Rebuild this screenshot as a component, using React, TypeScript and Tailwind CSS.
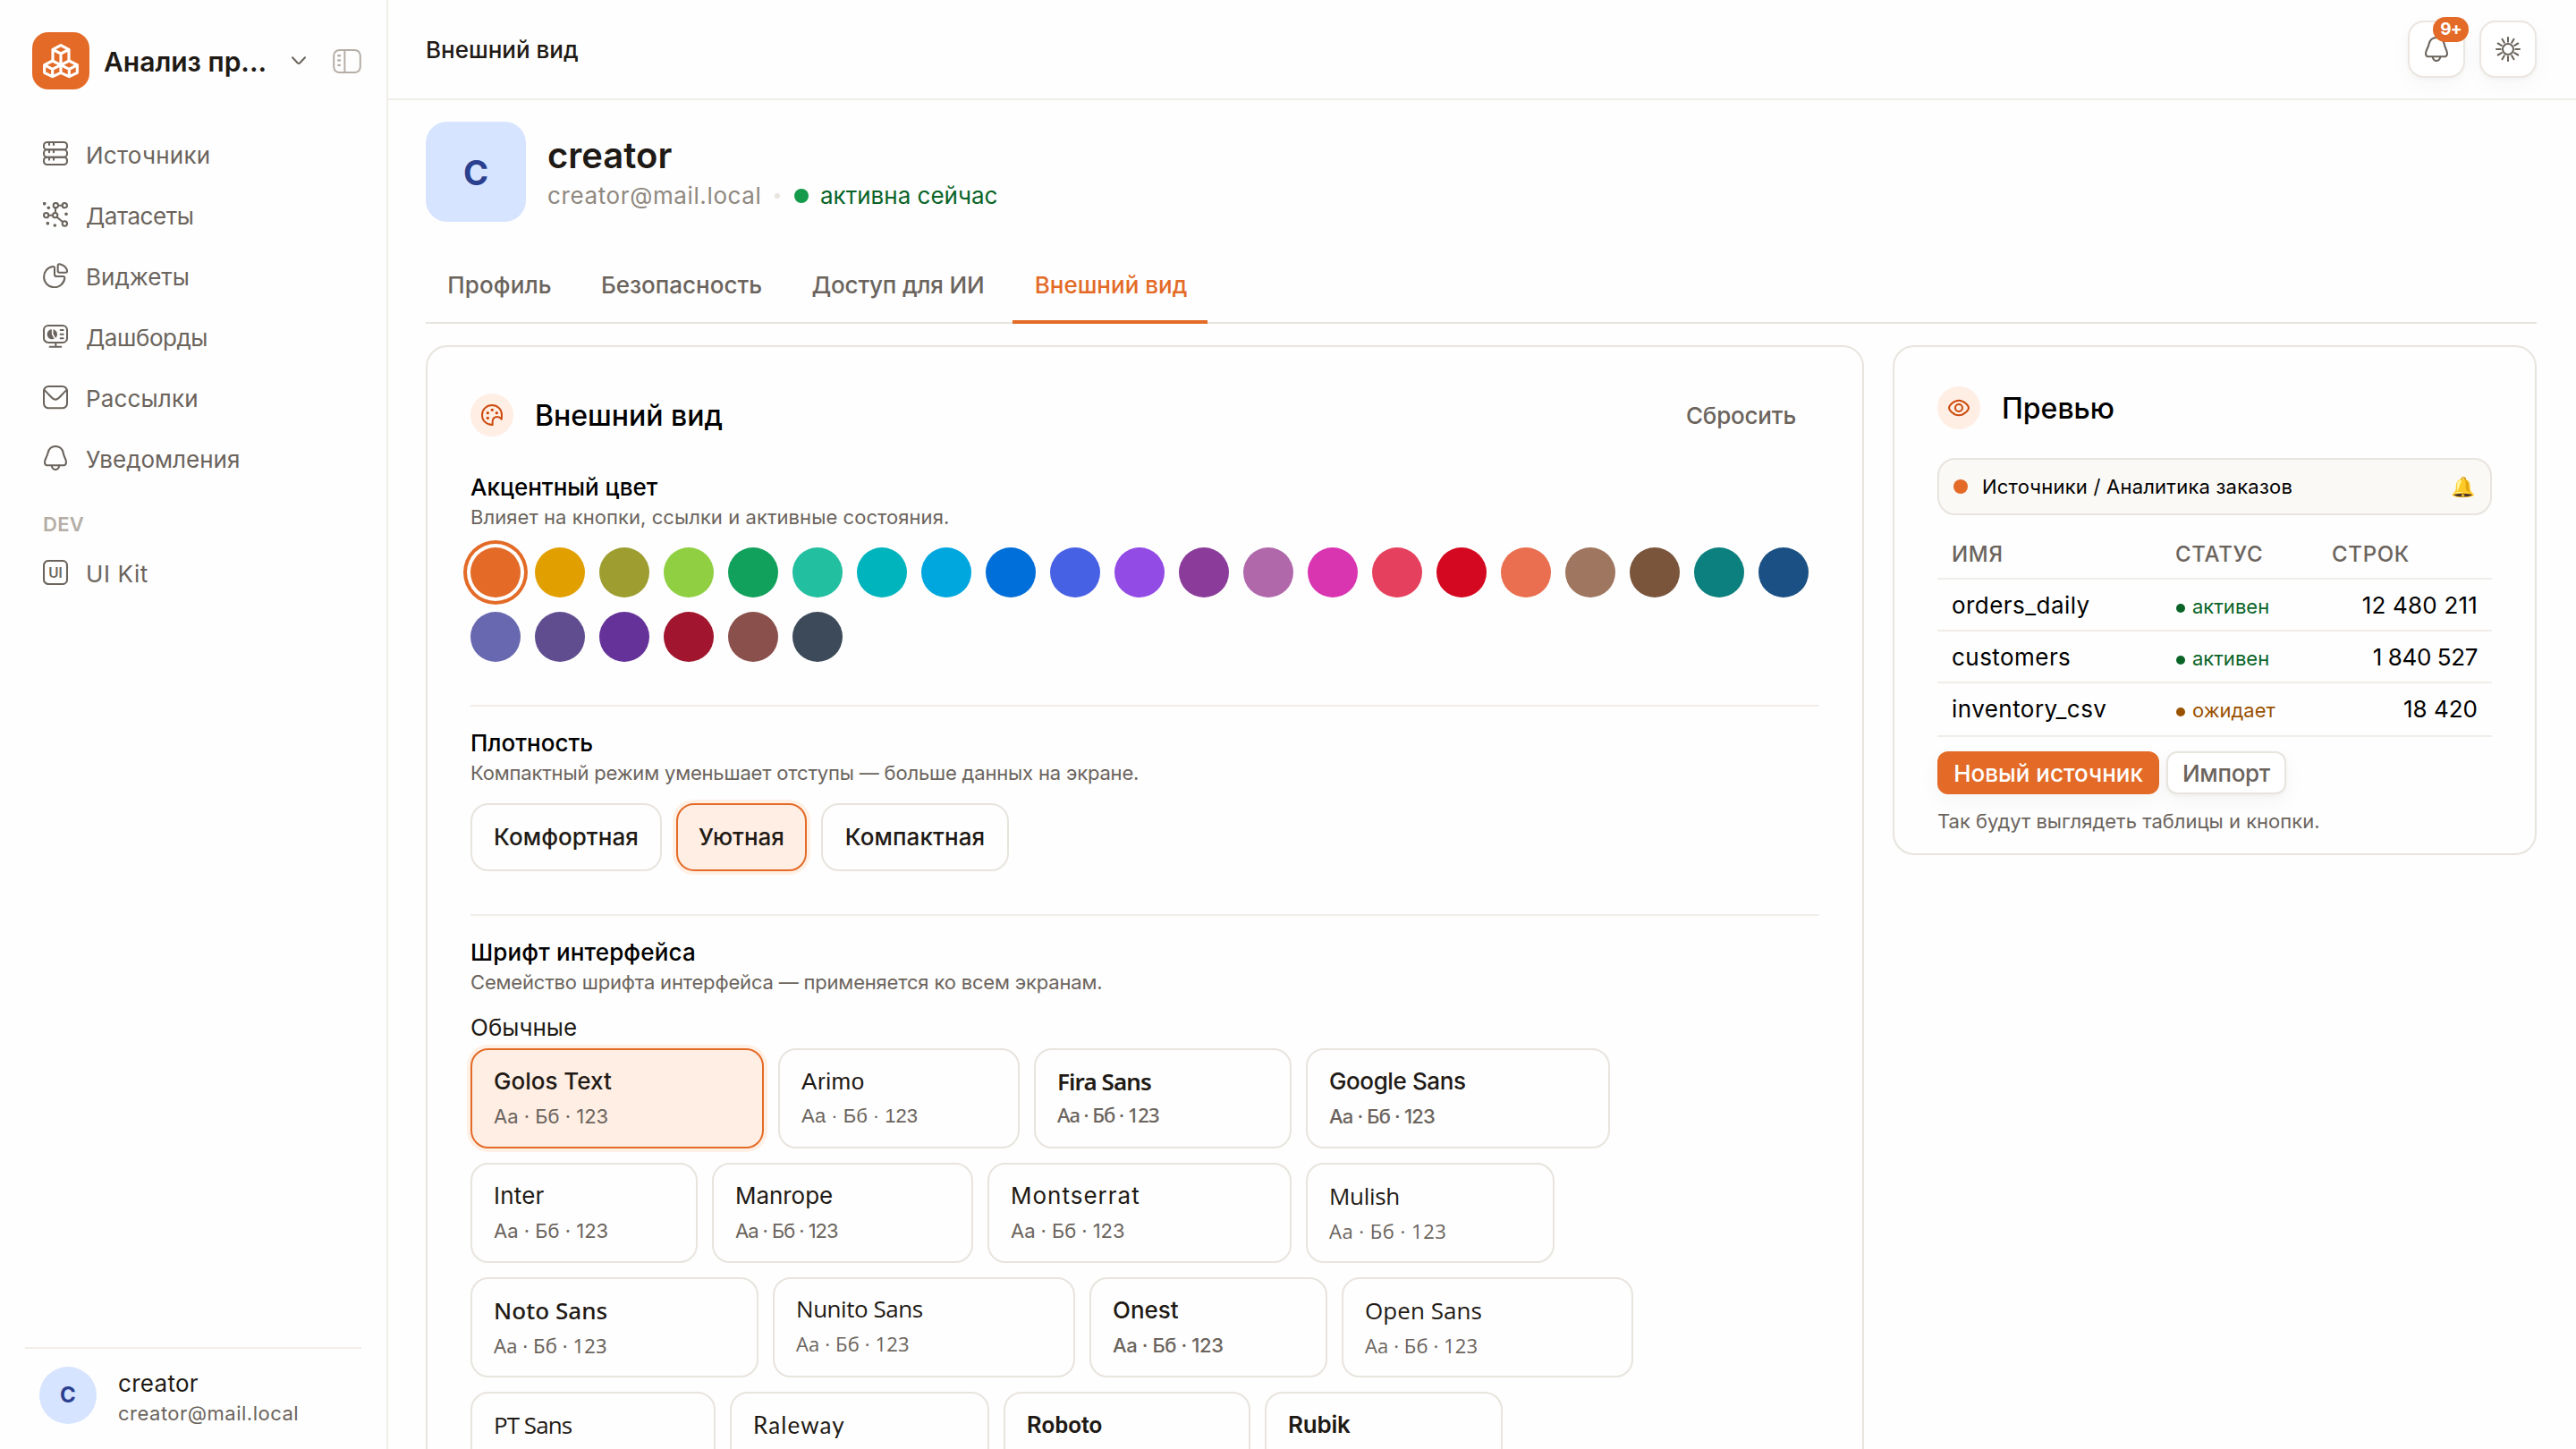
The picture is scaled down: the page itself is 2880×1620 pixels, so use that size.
import type { ReactNode } from "react";
import clsx from "clsx";

const Icon = ({ children, className = "size-7" }: { children: ReactNode; className?: string }) => (
  <svg
    viewBox="0 0 84 84"
    fill="none"
    stroke="currentColor"
    strokeWidth={6.2}
    strokeLinecap="round"
    strokeLinejoin="round"
    className={clsx("shrink-0", className)}
  >
    {children}
  </svg>
);

const SourcesIcon = () => (
  <Icon>
    <rect x="3" y="3" width="78" height="25" rx="11" />
    <rect x="3" y="28" width="78" height="25" rx="11" />
    <rect x="3" y="53" width="78" height="25" rx="11" />
    <path d="M21 5v7M36 5v7M21 30v7M36 30v7M21 55v7M36 55v7" />
  </Icon>
);

const DatasetsIcon = () => (
  <Icon>
    <circle cx="43" cy="11" r="8" />
    <circle cx="73" cy="11" r="8" />
    <circle cx="11" cy="44" r="8" />
    <circle cx="41" cy="44" r="8" />
    <circle cx="73" cy="72" r="8" />
    <path d="M51 11h14M19 44h14M42 36V19M47 50l19 16" />
    <g fill="currentColor" stroke="none">
      <circle cx="5" cy="5" r="5.5" />
      <circle cx="19" cy="19" r="5.5" />
      <circle cx="78" cy="40" r="5.5" />
      <circle cx="16" cy="71" r="5.5" />
      <circle cx="40" cy="78" r="5.5" />
    </g>
  </Icon>
);

const WidgetsIcon = () => (
  <Icon>
    <path d="M33 12A35 35 0 1 0 73 51Q73 45 68 45H46Q39 45 39 38V17Q39 11 33 12Z" />
    <path d="M50 9Q50 3 56 4Q78 10 81 26Q82 32 76 32H56Q50 32 50 27Z" />
  </Icon>
);

const DashboardsIcon = () => (
  <Icon>
    <rect x="3" y="6" width="78" height="57" rx="15" />
    <path d="M43 63v14M23 77h38M59 21h9M59 35h9M59 49h9" />
    <circle cx="31" cy="35" r="17" fill="currentColor" stroke="none" />
    <path d="M32 17v17l9 17" stroke="#fefefe" strokeWidth="5" />
  </Icon>
);

const MailIcon = () => (
  <Icon>
    <rect x="3" y="6" width="78" height="73" rx="16" />
    <path d="M4 18C20 30 30 50 42 50S64 30 80 18" />
  </Icon>
);

const BellIcon = () => (
  <Icon>
    <path d="M42 3C28 3 20 12 17 24C14 38 6 46 6 56C6 63 11 67 17 67H66C73 67 78 63 78 56C78 46 70 38 68 24C65 12 56 3 42 3Z" />
    <path d="M29 68C31 76 36 81 42 81S53 76 55 68" />
  </Icon>
);

const UiKitIcon = () => (
  <Icon>
    <rect x="3" y="3" width="78" height="78" rx="15" />
    <text x="42" y="59" textAnchor="middle" fontSize="46" fontWeight="600" fill="currentColor" stroke="none">
      UI
    </text>
  </Icon>
);

const rays = [0, 30, 60, 90, 120, 150, 180, 210, 240, 270, 300, 330];

const SunIcon = () => (
  <Icon>
    <circle cx="42" cy="42" r="18" />
    {rays.map((deg) => (
      <path key={deg} d="M42 3v14" transform={`rotate(${deg} 42 42)`} />
    ))}
  </Icon>
);

const PaletteIcon = () => (
  <svg viewBox="0 0 72 72" fill="none" stroke="currentColor" strokeWidth={6} strokeLinejoin="round" className="size-6">
    <path d="M38 69C18 69 3 55 3 36C3 17 18 3 36 3C55 3 69 17 69 36C69 42 69 46 68 50Q62 42 54 42C43 42 38 50 38 59Z" />
    <g fill="currentColor" stroke="none">
      <circle cx="22" cy="29" r="5" />
      <circle cx="37" cy="19" r="5" />
      <circle cx="52" cy="29" r="5" />
      <circle cx="22" cy="46" r="5" />
    </g>
  </svg>
);

const EyeIcon = () => (
  <svg viewBox="0 0 72 72" fill="none" stroke="currentColor" strokeWidth={6} className="size-6">
    <path d="M3 36C3 29 18 11 36 11S69 29 69 36S54 61 36 61S3 43 3 36Z" />
    <circle cx="36" cy="36" r="12" />
  </svg>
);

const LogoIcon = () => (
  <svg viewBox="0 0 120 120" fill="none" stroke="white" strokeWidth={9.5} strokeLinecap="round" strokeLinejoin="round" className="size-10">
    <path d="M33 58V22L60 8L87 22V58M33 22L60 36L87 22M60 36V72" />
    <path d="M5 74L32 60L60 74L32 88ZM5 74V100L32 113L60 100V74M32 88V113" />
    <path d="M60 74L88 60L115 74L88 88ZM115 74V100L88 113L60 100M88 88V113" />
  </svg>
);

const navItems = [
  { label: "Источники", icon: <SourcesIcon />, tracking: "tracking-[0.25px]" },
  { label: "Датасеты", icon: <DatasetsIcon />, tracking: "tracking-[-0.5px]" },
  { label: "Виджеты", icon: <WidgetsIcon />, tracking: "tracking-normal" },
  { label: "Дашборды", icon: <DashboardsIcon />, tracking: "tracking-[-0.45px]" },
  { label: "Рассылки", icon: <MailIcon />, tracking: "tracking-[0.15px]" },
  { label: "Уведомления", icon: <BellIcon />, tracking: "tracking-normal" },
];

const tabs = [
  { label: "Профиль", className: "w-[164px] pl-px tracking-[0.1px]" },
  { label: "Безопасность", className: "w-[228px] tracking-normal" },
  { label: "Доступ для ИИ", className: "w-[240px] tracking-[-0.2px]" },
  { label: "Внешний вид", className: "w-[218px] pl-0.5 tracking-normal", active: true },
];

const accents = [
  "bg-[#e36b27]", "bg-[#e2a000]", "bg-[#9e9d30]", "bg-[#90cf41]", "bg-[#12a15c]", "bg-[#22bfa0]", "bg-[#00b4bd]",
  "bg-[#00a7df]", "bg-[#006fd9]", "bg-[#4761e4]", "bg-[#934be6]", "bg-[#8b3c9a]", "bg-[#b068ab]", "bg-[#d935b1]",
  "bg-[#e5405d]", "bg-[#d40820]", "bg-[#ea6f50]", "bg-[#9f765f]", "bg-[#7a553c]", "bg-[#0c807e]", "bg-[#1a5083]",
  "bg-[#6868b0]", "bg-[#604d90]", "bg-[#653299]", "bg-[#a1162e]", "bg-[#8a504b]", "bg-[#3d4a59]",
];

const densities = [
  { label: "Комфортная", className: "w-[214px] tracking-[0.05px]" },
  { label: "Уютная", className: "w-[146px]", active: true },
  { label: "Компактная", className: "w-[210px] tracking-[0.1px]" },
];

type FontCard = { name: string; width: string; title: string; sample?: string; active?: boolean };

const fontRows: FontCard[][] = [
  [
    { name: "Golos Text", width: "w-[328px]", title: "font-medium", sample: "tracking-normal", active: true },
    { name: "Arimo", width: "w-[270px]", title: "font-['Liberation_Sans'] tracking-[0.6px]", sample: "font-['Liberation_Sans']" },
    { name: "Fira Sans", width: "w-[288px]", title: "font-['Noto_Sans'] font-semibold tracking-[-0.9px]", sample: "font-['Noto_Sans'] font-medium tracking-[-1px] -translate-y-0.5" },
    { name: "Google Sans", width: "w-[340px]", title: "font-medium tracking-[-0.4px]", sample: "font-medium tracking-[-0.83px]" },
  ],
  [
    { name: "Inter", width: "w-[254px]", title: "tracking-[0.2px]", sample: "tracking-normal" },
    { name: "Manrope", width: "w-[292px]", title: "tracking-[-0.05px]", sample: "tracking-[-1.05px]" },
    { name: "Montserrat", width: "w-[340px]", title: "tracking-[1px]", sample: "tracking-[-0.05px]" },
    { name: "Mulish", width: "w-[278px]", title: "font-['Open_Sans'] tracking-[-0.3px]", sample: "font-['Open_Sans'] tracking-[0.5px]" },
  ],
  [
    { name: "Noto Sans", width: "w-[322px]", title: "font-['Noto_Sans'] font-medium tracking-[0.05px]", sample: "font-['Noto_Sans'] tracking-[0.1px]" },
    { name: "Nunito Sans", width: "w-[338px]", title: "font-['Open_Sans'] tracking-[-0.45px] -translate-y-0.5", sample: "font-['Open_Sans'] tracking-[0.15px] -translate-y-0.5" },
    { name: "Onest", width: "w-[266px]", title: "font-medium", sample: "font-medium tracking-[-0.4px]" },
    { name: "Open Sans", width: "w-[326px]", title: "font-['Open_Sans'] font-medium tracking-[0.05px]", sample: "font-['Open_Sans'] tracking-[0.1px]" },
  ],
  [
    { name: "PT Sans", width: "w-[274px]", title: "font-['Open_Sans'] text-[25px] tracking-[-0.95px]" },
    { name: "Raleway", width: "w-[290px]", title: "font-['Lato'] tracking-[1.1px]" },
    { name: "Roboto", width: "w-[276px]", title: "font-['Roboto'] font-semibold tracking-[0.1px]" },
    { name: "Rubik", width: "w-[266px]", title: "font-semibold tracking-[-0.2px]" },
  ],
];

const tableRows = [
  { name: "orders_daily", status: "активен", count: "12 480 211", ok: true, countClass: "tracking-[0.2px]" },
  { name: "customers", status: "активен", count: "1 840 527", ok: true, countClass: "tracking-[-0.4px]" },
  { name: "inventory_csv", status: "ожидает", count: "18 420", ok: false, countClass: "" },
];

const Sidebar = () => (
  <aside className="flex w-[434px] shrink-0 flex-col border-r-2 border-[#f1eeea]">
    <div className="flex h-[138px] items-start pl-9 pt-9">
      <div className="flex h-16 items-center">
        <div className="flex size-16 items-center justify-center rounded-[18px] bg-[#e36b27]">
          <LogoIcon />
        </div>
        <span className="ml-4 w-[210px] whitespace-nowrap pt-0.5 text-[30px] font-semibold text-[#1f1a15]">Анализ пр...</span>
        <svg viewBox="0 0 16 10" fill="none" stroke="#6b645d" strokeWidth={2} strokeLinecap="round" strokeLinejoin="round" className="h-[10px] w-4">
          <path d="M1 1.3L6.6 7.3Q8 8.6 9.4 7.3L15 1.3" />
        </svg>
        <svg viewBox="0 0 96 82" fill="none" stroke="#b5aea6" strokeWidth={6} strokeLinecap="round" className="ml-[30px] h-[27px] w-8">
          <rect x="3" y="3" width="90" height="76" rx="19" />
          <path d="M40 4v74" />
          <path d="M18 22h6M18 38h6M18 54h6" strokeWidth={7} />
        </svg>
      </div>
    </div>
    <nav className="flex flex-1 flex-col text-[26px] text-[#6b645d]">
      {navItems.map((item) => (
        <a key={item.label} className="flex h-[68px] items-center gap-5 pl-12">
          {item.icon}
          <span className={clsx("pt-0.5", item.tracking)}>{item.label}</span>
        </a>
      ))}
      <div className="flex h-[60px] items-center pl-12 pt-5 text-[22px] font-semibold tracking-[0.3px] text-[#b5aea6]">DEV</div>
      <a className="flex h-[68px] items-center gap-5 pl-12">
        <UiKitIcon />
        <span className="pt-0.5 tracking-[0.6px]">UI Kit</span>
      </a>
    </nav>
    <div className="mx-7 flex h-[114px] items-start gap-6 border-t-2 border-[#f1eeea] pl-4 pt-5">
      <div className="flex size-16 items-center justify-center rounded-full bg-[#d6e4ff] text-[24px] font-bold text-[#2b3f8f]">C</div>
      <div className="pt-[2px]">
        <div className="text-[26px] leading-[33px] tracking-[0.3px] text-[#1f1a15]">creator</div>
        <div className="text-[22px] leading-[34px] tracking-[0.5px] text-[#6b645d]">creator@mail.local</div>
      </div>
    </div>
  </aside>
);

const iconButton =
  "relative flex size-16 items-center justify-center rounded-[18px] border-2 border-[#ebe6e1] bg-white text-[#6b645d] shadow-[0_2px_4px_rgba(0,0,0,0.03),0_8px_24px_rgba(0,0,0,0.03)]";

const Header = () => (
  <header className="flex h-28 items-center justify-between border-b-2 border-[#f1eeea] pl-[42px] pr-11">
    <h1 className="text-[26px] font-medium text-[#1f1a15]">Внешний вид</h1>
    <div className="flex gap-4">
      <button className={iconButton}>
        <BellIcon />
        <span className="absolute -top-1.5 left-[26px] flex h-7 w-10 items-center justify-center rounded-full bg-[#e36b27] pt-px text-[19px] font-bold tracking-[-0.8px] text-white">
          9+
        </span>
      </button>
      <button className={iconButton}>
        <SunIcon />
      </button>
    </div>
  </header>
);

const Profile = () => (
  <div className="flex items-center gap-6">
    <div className="flex size-28 items-center justify-center rounded-3xl bg-[#d6e4ff] pt-0.5 text-[38px] font-bold text-[#2b3f8f]">C</div>
    <div className="pt-[2px]">
      <div className="text-[40px] font-semibold leading-[48px] text-[#1f1a15]">creator</div>
      <div className="mt-[3px] flex items-center text-[26px] leading-9">
        <span className="w-[254px] tracking-[0.62px] text-[#8f8880]">creator@mail.local</span>
        <span className="size-1.5 rounded-full bg-[#e8e4de]" />
        <span className="ml-4 size-4 rounded-full bg-[#159a4b]" />
        <span className="ml-[13px] text-[#0a6428]">активна сейчас</span>
      </div>
    </div>
  </div>
);

const Tabs = () => (
  <div className="mt-8 flex gap-2 border-b-2 border-[#e8e4de]">
    {tabs.map((tab) => (
      <button
        key={tab.label}
        className={clsx(
          "-mb-0.5 border-b-4 pb-[21px] pt-[21px] text-center text-[26px] font-medium leading-9",
          tab.className,
          tab.active ? "border-[#e36b27] text-[#e36b27]" : "border-transparent text-[#6b645d]"
        )}
      >
        {tab.label}
      </button>
    ))}
  </div>
);

const SectionTitle = ({ title, text, titleClass, textClass }: { title: string; text: string; titleClass?: string; textClass?: string }) => (
  <>
    <h3 className={clsx("h-9 text-[26px] font-medium leading-[38px] text-black", titleClass)}>{title}</h3>
    <p className={clsx("mb-5 mt-0.5 text-[22px] leading-7 text-[#6b645d]", textClass)}>{text}</p>
  </>
);

const selectable = (active?: boolean) =>
  active
    ? "border-[#e36b27] bg-[#ffeee4] ring-4 ring-[#fff0e6]"
    : "border-[#e8e4de]";

const AppearanceCard = () => (
  <section className="w-[1608px] shrink-0 rounded-3xl border-2 border-[#e8e4de] p-12">
    <div className="flex h-14 items-center">
      <div className="flex size-12 items-center justify-center rounded-full bg-[#ffeee4] text-[#cc4a0c]">
        <PaletteIcon />
      </div>
      <h2 className="ml-6 flex-1 pt-0.5 text-[32px] font-medium text-black">Внешний вид</h2>
      <button className="pr-[26px] text-[26px] font-medium tracking-[-0.2px] text-[#6b645d]">Сбросить</button>
    </div>

    <div className="mt-[34px] border-b-2 border-[#f1ede8] pb-12">
      <SectionTitle title="Акцентный цвет" text="Влияет на кнопки, ссылки и активные состояния." textClass="tracking-[0.06px]" />
      <div className="flex flex-wrap gap-4">
        {accents.map((accent, i) => (
          <button
            key={accent}
            className={clsx("size-14 rounded-full", accent, i === 0 && "ring-4 ring-[#e36b27] ring-offset-4 ring-offset-[#fefefe]")}
          />
        ))}
      </div>
    </div>

    <div className="border-b-2 border-[#f1ede8] pb-12 pt-[22px]">
      <SectionTitle title="Плотность" text="Компактный режим уменьшает отступы — больше данных на экране." textClass="tracking-[-0.18px]" />
      <div className="flex gap-4">
        {densities.map((density) => (
          <button
            key={density.label}
            className={clsx("h-[76px] rounded-[20px] border-2 pb-0.5 text-[26px] font-medium text-[#1f1a15]", density.className, selectable(density.active))}
          >
            {density.label}
          </button>
        ))}
      </div>
    </div>

    <div className="pt-[22px]">
      <SectionTitle
        title="Шрифт интерфейса"
        text="Семейство шрифта интерфейса — применяется ко всем экранам."
        titleClass="tracking-[0.15px]"
        textClass="tracking-[-0.18px]"
      />
      <div className="-mt-0.5 mb-1.5 h-9 text-[26px] leading-[38px] text-[#1f1a15]">Обычные</div>
      <div className="flex flex-col gap-4">
        {fontRows.map((row, i) => (
          <div key={i} className="flex gap-4">
            {row.map((font) => (
              <button
                key={font.name}
                className={clsx("flex h-28 flex-col items-start rounded-[20px] border-2 px-6 pt-4", font.width, selectable(font.active))}
              >
                <span className={clsx("h-9 text-[26px] leading-[38px] text-[#1f1a15]", font.title)}>{font.name}</span>
                {font.sample && (
                  <span className={clsx("mt-2 text-[22px] leading-7 text-[#6b645d]", font.sample)}>Аа · Бб · 123</span>
                )}
              </button>
            ))}
          </div>
        ))}
      </div>
    </div>
  </section>
);

const PreviewCard = () => (
  <section className="flex-1 rounded-3xl border-2 border-[#e8e4de] px-12 pb-[22px] pt-11">
    <div className="flex h-12 items-center">
      <div className="flex size-12 items-center justify-center rounded-full bg-[#ffeee4] text-[#cc4a0c]">
        <EyeIcon />
      </div>
      <h2 className="ml-6 pt-0.5 text-[32px] font-medium text-black">Превью</h2>
    </div>

    <div className="mt-8 flex h-16 items-center rounded-[20px] border-2 border-[#e8e4de] bg-[#fbf9f5] px-4 text-[22px]">
      <span className="size-4 rounded-full bg-[#e36b27]" />
      <span className="ml-4 flex-1 tracking-[0.22px] text-black">Источники / Аналитика заказов</span>
      <span>🔔</span>
    </div>

    <div className="mt-4 grid h-14 grid-cols-[250px_175px_1fr] items-center border-b-2 border-[#f1ede8] px-4 pt-0.5 text-[24px] font-medium tracking-[0.7px] text-[#6b645d]">
      <span>ИМЯ</span>
      <span>СТАТУС</span>
      <span>СТРОК</span>
    </div>
    {tableRows.map((row) => (
      <div
        key={row.name}
        className="grid h-[58px] grid-cols-[250px_175px_1fr] items-center border-b-2 border-[#f1ede8] px-4 text-[26px] leading-9 text-black last-of-type:h-[60px] last-of-type:pb-0.5"
      >
        <span className="pt-0.5 tracking-[0.45px]">{row.name}</span>
        <span className={clsx("flex items-center gap-2 pl-px pt-[3px] text-[22px]", row.ok ? "text-[#0a6428]" : "text-[#9a5200]")}>
          <span className="mt-1 size-2.5 rounded-full bg-current" />
          {row.status}
        </span>
        <span className={clsx("pt-0.5 text-right", row.countClass)}>{row.count}</span>
      </div>
    ))}

    <footer className="pt-4">
      <div className="flex gap-2">
        <button className="h-12 w-[248px] rounded-xl bg-[#e36b27] text-[26px] font-medium text-white shadow-[0_8px_24px_rgba(0,0,0,0.04)]">
          Новый источник
        </button>
        <button className="h-12 w-[134px] rounded-xl border-2 border-[#e8e4de] bg-white text-[26px] font-medium tracking-[-0.3px] text-[#6b645d] shadow-[0_2px_4px_rgba(0,0,0,0.04),0_8px_24px_rgba(0,0,0,0.04)]">
          Импорт
        </button>
      </div>
      <p className="mt-4 text-[22px] leading-7 text-[#6b645d]">Так будут выглядеть таблицы и кнопки.</p>
    </footer>
  </section>
);

export default function App() {
  return (
    <div className="flex h-[1620px] w-[2880px] overflow-hidden bg-[#fefefe] font-['Inter','Noto_Color_Emoji',sans-serif]">
      <Sidebar />
      <main className="flex-1">
        <Header />
        <div className="pl-[42px] pr-11 pt-6">
          <Profile />
          <Tabs />
          <div className="mt-6 flex items-start gap-8">
            <AppearanceCard />
            <PreviewCard />
          </div>
        </div>
      </main>
    </div>
  );
}
